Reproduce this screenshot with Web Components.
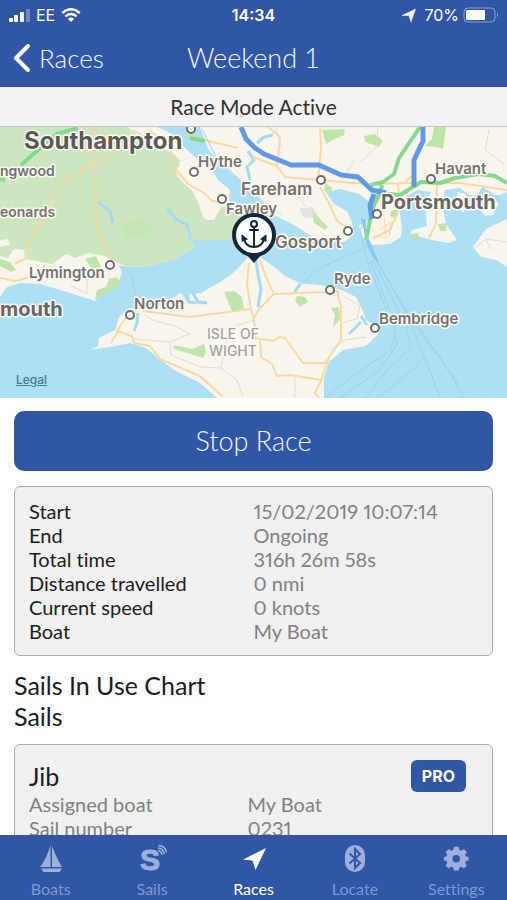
<!DOCTYPE html>
<html lang="en">
<head>
<meta charset="utf-8">
<meta name="viewport" content="width=device-width, initial-scale=1">
<title>Weekend 1</title>
<style>
  body {
    margin: 0;
    font-family: "Century Gothic", Lato, sans-serif;
    font-variant-ligatures: none;
    color: #1c1c1c;
    background: #fff;
    --brand: #3156a5;
    --brand-muted: #8099d0;
    --brand-icon: #9db0dc;
    --panel: #f0f0f0;
    --line: #a9abab;
    --system-font: Inter, "Liberation Sans", sans-serif;
  }
</style>
</head>
<body>
<race-app>
  <status-bar slot="top" carrier="EE" time="14:34" battery="70%"></status-bar>
  <nav-bar slot="top" back="Races">Weekend 1</nav-bar>
  <mode-banner slot="top">Race Mode Active</mode-banner>
  <race-map></race-map>
  <action-button>Stop Race</action-button>
  <info-card>
    <info-table rows='[["Start","15/02/2019 10:07:14"],["End","Ongoing"],["Total time","316h 26m 58s"],["Distance travelled","0 nmi"],["Current speed","0 knots"],["Boat","My Boat"]]'></info-table>
  </info-card>
  <section-title>Sails In Use Chart</section-title>
  <section-title>Sails</section-title>
  <sail-card name="Jib" badge="PRO">
    <info-table muted rows='[["Assigned boat","My Boat"],["Sail number","0231"]]'></info-table>
  </sail-card>
  <tab-bar slot="bottom">
    <tab-item icon="boat">Boats</tab-item>
    <tab-item icon="sail">Sails</tab-item>
    <tab-item icon="race" active>Races</tab-item>
    <tab-item icon="bluetooth">Locate</tab-item>
    <tab-item icon="gear">Settings</tab-item>
  </tab-bar>
</race-app>

<script>
class RaceApp extends HTMLElement {
  constructor() {
    super();
    this.attachShadow({ mode: 'open' });
  }

  connectedCallback() {
    this.shadowRoot.innerHTML = `
      <style>
        :host {
          display: flex;
          flex-direction: column;
          height: 100vh;
        }
        main {
          flex: 1;
          min-height: 0;
          overflow-y: auto;
          scrollbar-width: none;
        }
      </style>
      <slot name="top"></slot>
      <main><slot></slot></main>
      <slot name="bottom"></slot>
    `;
  }
}

class StatusBar extends HTMLElement {
  constructor() {
    super();
    this.attachShadow({ mode: 'open' });
  }

  connectedCallback() {
    this.shadowRoot.innerHTML = `
      <style>
        :host {
          display: grid;
          grid-template-columns: 1fr auto 1fr;
          align-items: center;
          height: 30px;
          padding: 0 8px;
          background: var(--brand);
          color: #fff;
          font: 16px/20px var(--system-font);
        }
        div {
          display: flex;
          align-items: center;
          gap: 6px;
        }
        .right {
          justify-content: flex-end;
          gap: 4px;
        }
        .right svg:first-child {
          margin-right: 4px;
        }
        b {
          font-weight: 600;
        }
      </style>
      <div>
        <svg width="22" height="13" viewBox="0 0 22 13" fill="#fff" aria-hidden="true">
          <rect x="1" y="9" width="4" height="4" rx="1"/>
          <rect x="6" y="6" width="4" height="7" rx="1"/>
          <rect x="12" y="3" width="4" height="10" rx="1"/>
          <rect x="18" y="0" width="4" height="13" rx="1" opacity=".3"/>
        </svg>
        <span>${this.getAttribute('carrier')}</span>
        <svg width="20" height="14" viewBox="0 0 20 14" fill="none" stroke="#fff" stroke-width="2.5" aria-hidden="true">
          <path d="M1.2 5Q10-2.6 18.8 5M4.4 8.4Q10 3.6 15.6 8.4"/>
          <path d="M6.9 10.9Q10 8.2 13.1 10.9L10 14Z" fill="#fff" stroke="none"/>
        </svg>
      </div>
      <b>${this.getAttribute('time')}</b>
      <div class="right">
        <svg width="14" height="13" viewBox="0 0 14 13" aria-hidden="true">
          <path d="M13.5 0L9 13L7 6.600L0 6.5Z" fill="#fff" stroke="#fff" stroke-width=".5"/>
        </svg>
        <span>${this.getAttribute('battery')}</span>
        <svg width="36" height="16" viewBox="0 0 36 16" aria-hidden="true">
          <rect x="1" y="1" width="31" height="14" rx="4" fill="none" stroke="#8ba2d3"/>
          <rect x="3" y="3" width="19" height="10" rx="1" fill="#fff"/>
          <path d="M34 5.5Q36 8 34 10.5Z" fill="#8ba2d3"/>
        </svg>
      </div>
    `;
  }
}

class NavBar extends HTMLElement {
  constructor() {
    super();
    this.attachShadow({ mode: 'open' });
  }

  connectedCallback() {
    this.shadowRoot.innerHTML = `
      <style>
        :host {
          display: grid;
          grid-template-columns: 1fr auto 1fr;
          align-items: center;
          height: 55px;
          padding: 0 13px 2px;
          background: var(--brand);
          color: #f2f6ff;
        }
        a {
          display: flex;
          align-items: center;
          gap: 9px;
          color: inherit;
          font-size: 26px;
          line-height: 32px;
          font-weight: 300;
          text-decoration: none;
        }
        h1 {
          margin: 0;
          font-size: 27px;
          line-height: 32px;
          font-weight: 300;
        }
      </style>
      <a href="#races">
        <svg width="17" height="28" viewBox="0 0 17 28" fill="none" stroke="#fff" stroke-width="4" stroke-linecap="round" stroke-linejoin="round" aria-hidden="true">
          <path d="M15 2L3 14L15 26"/>
        </svg>
        ${this.getAttribute('back')}
      </a>
      <h1><slot></slot></h1>
    `;
  }
}

class ModeBanner extends HTMLElement {
  constructor() {
    super();
    this.attachShadow({ mode: 'open' });
  }

  connectedCallback() {
    this.shadowRoot.innerHTML = `
      <style>
        :host {
          display: block;
          padding: 7px 0 6px;
          border-bottom: 1px solid #c4c4c4;
          background: #f2f2f2;
          color: #303030;
          font-size: 21px;
          line-height: 26px;
          text-align: center;
        }
      </style>
      <slot></slot>
    `;
  }
}

class RaceMap extends HTMLElement {
  constructor() {
    super();
    this.attachShadow({ mode: 'open' });
  }

  connectedCallback() {
    this.shadowRoot.innerHTML = `
      <style>
        :host {
          display: block;
          position: relative;
          background: #ade0f4;
        }
        .map {
          display: block;
          width: 100%;
          height: auto;
        }
        .land { fill: #f9f5ed; }
        .forest { fill: #cce7c0; }
        .park { fill: #c0e5ab; }
        .inlet { fill: none; stroke: #a4dbf2; stroke-width: 3; }
        .road { fill: none; stroke: #fad9a1; stroke-width: 2; stroke-linejoin: round; }
        .lane { fill: none; stroke: #dfdcd7; stroke-width: 1; }
        .trunk { fill: none; stroke: #83d98c; stroke-width: 4; stroke-linejoin: round; }
        .motorway { fill: none; stroke: #5f9ae8; stroke-width: 5; stroke-linejoin: round; }
        .ferry { fill: none; stroke: #9ad2f0; stroke-width: 1; }
        .dots circle { fill: #fff; stroke: #706d69; stroke-width: 2; }
        text {
          font-family: var(--system-font);
          font-weight: 600;
          font-size: 15px;
          fill: #74716e;
          stroke: #fbf9f4;
          stroke-width: 3;
          stroke-linejoin: round;
          paint-order: stroke;
        }
        .city { font-size: 24px; font-weight: 700; fill: #5b5955; }
        .large { font-size: 20px; font-weight: 700; fill: #686562; }
        .town { font-size: 17px; }
        .edge { font-size: 14px; }
        .region { font-size: 14px; font-weight: 500; fill: #a3a09d; text-anchor: middle; }
        a {
          position: absolute;
          left: 16px;
          bottom: 10px;
          color: #53738a;
          font: 500 12px/16px var(--system-font);
        }
      </style>
      <svg class="map" viewBox="0 127 507 271" role="img" aria-label="Map of the Solent">
        <!-- mainland, west of Southampton Water -->
        <path class="land" d="M0 127H157L172 134L182 145L198 160L212 170L218 180L230 190L229 201L247 214L236 226L230 240H192L195 247L187 252L173 260L150 266L127 267L118 265L122 272L117 287L104 293L95 301L67 292L40 284L20 283L7 287L0 297Z"/>
        <path class="forest" d="M0 127H128L140 138L160 147L172 153L180 160L188 161L175 170L182 182L198 195L200 208L207 220H214L222 206L247 214L236 226L230 240H192L195 247L187 252L173 260L150 266L127 267L113 261L104 256L88 253L75 258L66 254L52 264L25 259L24 250L14 249L8 258L0 256Z"/>
        <path class="land" d="M0 240L8 239L10 245L0 247Z"/>
        <path class="land" d="M180 161L196 158L212 171L218 180L229 190L228 199L213 205L212 219L204 219L197 200L192 190L177 176Z"/>
        <path class="park" d="M0 259L10 262L16 270L11 272L0 266ZM85 259L96 256L101 267L92 269ZM117 277L121 284L110 291L95 300L97 290L106 287L109 279Z"/>
        <path d="M120 226L140 219L154 225L146 236L127 239Z" fill="#c5e6b6"/>
        <path class="inlet" d="M98 202L110 211L113 223"/>
        <path class="inlet" d="M167 209L176 219L187 225L191 239"/>
        <path d="M187 227L194 242L189 241Z" fill="#ade0f4"/>

        <!-- mainland, east side -->
        <path class="land" d="M200 127H507V192L497 196L486 189L478 197L468 194L460 188L445 190L442 205L446 224L457 240L448 243L432 240L410 234L412 230L427 226L425 205L431 192L418 190L407 196L399 207L402 228L401 237L390 244L372 245L362 237L359 226L370 219L370 202L359 194L340 189L326 192L334 204L347 211L352 222L354 234L344 242L316 239L296 226L276 216L264 202L250 190L235 176L221 164L208 149Z"/>
        <path class="land" d="M507 219L486 229L473 247L481 257L496 260L507 267Z"/>
        <path class="land" d="M457 192L466 194L464 213L457 208ZM480 208L492 197L499 203L493 215L485 216Z"/>
        <path class="inlet" d="M248 151L254 160L247 167L250 180M257 143L264 137L273 135M478 196L484 188M496 195L500 203"/>
        <path d="M299 208L313 207L320 219L303 217Z" fill="#e6e3df"/>
        <path class="park" d="M322 130L345 129L344 135L333 140L326 144ZM364 136L375 134L383 141L379 147L365 142ZM434 127H446L443 149L436 147L424 146L432 139ZM312 211L320 219L328 227L325 230L314 223ZM325 183L332 188L331 193L324 191ZM391 211L398 208L397 218L390 217ZM409 234L418 233L419 240L410 238ZM438 224L447 223L446 231L440 231ZM186 127L196 136L197 141L187 137Z"/>

        <!-- Isle of Wight -->
        <path class="land" d="M90 350L98 346L99 338L115 330L119 317L129 308L143 309L163 303L181 293L189 303L190 294L201 293L220 282L232 274L240 266L249 256L260 257L273 266L285 276L300 283L326 286L342 290L356 297L362 309L366 320L381 329L377 335L366 346L343 350L329 362L324 378L324 398H217L200 383L174 370L157 357L146 348L130 343L110 347Z"/>
        <path class="inlet" d="M185 295L189 302L196 303M193 293L198 302L207 303M138 313L137 323L134 331M256 261L258 274L261 289L258 307M300 284L294 293M361 322L349 334M361 316L367 325"/>
        <path class="park" d="M173 345L192 349L204 344L206 353L203 358L184 352L174 349ZM224 292L234 291L242 297L244 309L232 311ZM297 296L305 297L308 302L300 307L295 301ZM331 308L339 307L341 319L333 327L335 315Z"/>

        <g class="lane">
          <path d="M25 245L60 250L75 230M70 285L87 294V273M145 315L155 321L175 326L190 334L170 342L134 339M170 342L171 355L200 367L221 368L237 380L243 397M221 368L226 342L235 326L254 320M330 350L345 340L366 337M340 323L357 319L360 306L345 297M295 378V398"/>
          <path d="M276 128L282 148M378 127L376 148L360 162M489 130L485 150L504 164M355 159L344 177M260 200L282 215M290 184L305 206M475 248L486 239L507 242M486 239L491 250"/>
        </g>
        <g class="road">
          <path d="M94 127L95 162L96 225L110 256M115 151L95 163L86 164L79 173L65 180L55 193L49 212L40 225L27 240L26 258L15 264M0 278L16 281L34 276L45 266M133 130L145 137L135 145M147 129L170 145L174 167L188 184L204 193L212 201L226 203M200 139L238 148"/>
          <path d="M253 157L277 166L285 177L320 180L365 184L410 183L460 183L507 190M268 127L280 137L277 167M320 127L321 150L318 179M320 187L330 205L337 221L349 229M398 183L400 207L390 230L373 238M405 182L415 173M437 183L436 224L429 238"/>
          <path d="M143 311L190 317L251 309L254 320L256 340M251 309L247 285L249 263M260 260L266 277L274 294L326 292L337 291L341 307L341 340L325 363H303L285 338L279 337L274 341L254 338M274 294L259 309L253 320M127 316L117 331L132 336L134 343L150 346L160 359L200 376L223 397M260 340L261 357L272 364L277 376L290 375L321 380M329 358L321 381L315 393L319 398M119 330L111 343"/>
        </g>
        <path d="M375 192L383 205L386 237M375 237L389 237L391 222L379 230" fill="none" stroke="#f6dbae" stroke-width="1"/>

        <g class="ferry">
          <path d="M202 129L217 159L238 178L258 207L275 235M123 266L132 276L135 296M371 245L350 254L315 271L294 292M365 222L360 230L367 260L382 300L395 330L391 350L360 371L324 398M370 260L392 316L397 345L378 371L340 398M373 260L405 323L411 347L385 372L366 398M376 260L406 312L424 356L416 367L400 380L378 398M380 267L415 325L449 371L464 398M424 356L440 397M407 310L459 385"/>
        </g>
        <path d="M361 218L367 245L373 258L379 264L372 245L366 234L366 220Z" fill="#8cc8ef"/>

        <path class="trunk" d="M78 128L57 134L39 149L21 165M5 180L0 179M190 138L205 141"/>
        <path class="trunk" d="M420 127L399 158L394 174L383 182L371 185M507 183L495 176L478 174L455 178L440 183L421 182L400 195L380 193L374 205L370 220L366 240M380 193L382 185"/>
        <path class="motorway" d="M241 127L246 139L255 148L264 154L291 165H319L341 175L358 177L372 190L386 193M423 127V141L414 160V187M374 194L370 205L372 219"/>

        <g class="dots">
          <circle cx="191" cy="129" r="4"/>
          <circle cx="194" cy="172" r="4"/>
          <circle cx="222" cy="199" r="4"/>
          <circle cx="321" cy="180" r="4"/>
          <circle cx="431" cy="179" r="4"/>
          <circle cx="377" cy="214" r="4"/>
          <circle cx="348" cy="231" r="4"/>
          <circle cx="110" cy="265" r="4"/>
          <circle cx="130" cy="315" r="4"/>
          <circle cx="330" cy="290" r="4"/>
          <circle cx="375" cy="328" r="4"/>
        </g>

        <text class="city" x="24" y="149">Southampton</text>
        <text class="edge" x="0" y="176">ngwood</text>
        <text class="edge" x="0" y="217">eonards</text>
        <text x="198" y="167">Hythe</text>
        <text class="town" x="241" y="195">Fareham</text>
        <text x="226" y="214">Fawley</text>
        <text x="435" y="174">Havant</text>
        <text class="large" x="381" y="209">Portsmouth</text>
        <text class="town" x="275" y="248">Gosport</text>
        <text x="29" y="278">Lymington</text>
        <text class="large" x="0" y="316">mouth</text>
        <text x="134" y="309">Norton</text>
        <text x="334" y="284">Ryde</text>
        <text x="379" y="324">Bembridge</text>
        <text class="region" x="233" y="339">ISLE OF</text>
        <text class="region" x="233" y="356">WIGHT</text>

        <!-- anchor pin -->
        <path d="M246 254L254 263L262 254Z" fill="#12283a"/>
        <circle cx="254" cy="235" r="20" fill="#fff" stroke="#12283a" stroke-width="4"/>
        <g fill="none" stroke="#12283a" stroke-width="2" stroke-linecap="round" stroke-linejoin="round">
          <circle cx="254" cy="224" r="3"/>
          <path d="M254 227V247M250 230H258M244 239Q246 247 254 247Q262 247 264 239"/>
          <path d="M242 241V235L247 239ZM266 241V235L261 239Z" fill="#12283a" stroke-width="1"/>
        </g>
      </svg>
      <a href="#legal">Legal</a>
    `;
  }
}

class ActionButton extends HTMLElement {
  constructor() {
    super();
    this.attachShadow({ mode: 'open' });
  }

  connectedCallback() {
    this.shadowRoot.innerHTML = `
      <style>
        :host {
          display: block;
          margin: 13px 14px 15px;
        }
        button {
          display: block;
          width: 100%;
          padding: 14px;
          border: 0;
          border-radius: 10px;
          background: var(--brand);
          color: #f2f6ff;
          font: inherit;
          font-size: 27px;
          line-height: 32px;
          font-weight: 300;
        }
      </style>
      <button type="button"><slot></slot></button>
    `;
  }
}

class InfoCard extends HTMLElement {
  constructor() {
    super();
    this.attachShadow({ mode: 'open' });
  }

  connectedCallback() {
    this.shadowRoot.innerHTML = `
      <style>
        :host {
          display: block;
          margin: 0 14px 14px;
          padding: 12px 14px;
          border: 1px solid var(--line);
          border-radius: 6px;
          background: var(--panel);
        }
      </style>
      <slot></slot>
    `;
  }
}

class InfoTable extends HTMLElement {
  constructor() {
    super();
    this.attachShadow({ mode: 'open' });
  }

  connectedCallback() {
    const rows = JSON.parse(this.getAttribute('rows'));
    this.shadowRoot.innerHTML = `
      <style>
        :host {
          display: block;
          font-size: 20px;
          line-height: 24px;
        }
        table {
          width: 100%;
          table-layout: fixed;
          border-collapse: collapse;
        }
        th, td {
          padding: 0;
          font-weight: 400;
          text-align: left;
        }
        td, :host([muted]) th {
          color: #808080;
        }
        td {
          font-variant-numeric: proportional-nums;
        }
      </style>
      <table>
        ${rows.map(([label, value]) => `<tr><th scope="row">${label}</th><td>${value}</td></tr>`).join('')}
      </table>
    `;
  }
}

class SectionTitle extends HTMLElement {
  constructor() {
    super();
    this.attachShadow({ mode: 'open' });
  }

  connectedCallback() {
    this.shadowRoot.innerHTML = `
      <style>
        :host {
          display: block;
          margin: 0 14px;
        }
        h2 {
          margin: 0;
          font-size: 25px;
          line-height: 31px;
          font-weight: 400;
        }
      </style>
      <h2><slot></slot></h2>
    `;
  }
}

class SailCard extends HTMLElement {
  constructor() {
    super();
    this.attachShadow({ mode: 'open' });
  }

  connectedCallback() {
    this.shadowRoot.innerHTML = `
      <style>
        :host {
          display: block;
          margin: 12px 14px;
          padding: 15px 26px 15px 14px;
          border: 1px solid var(--line);
          border-radius: 6px;
          background: var(--panel);
        }
        header {
          display: flex;
          justify-content: space-between;
          align-items: center;
        }
        h3 {
          margin: 0;
          font-size: 25px;
          line-height: 31px;
          font-weight: 400;
        }
        span {
          padding: 4px 11px;
          border-radius: 6px;
          background: var(--brand);
          color: #fff;
          font: 700 16px/24px var(--system-font);
        }
      </style>
      <header>
        <h3>${this.getAttribute('name')}</h3>
        <span>${this.getAttribute('badge')}</span>
      </header>
      <slot></slot>
    `;
  }
}

class TabBar extends HTMLElement {
  constructor() {
    super();
    this.attachShadow({ mode: 'open' });
  }

  connectedCallback() {
    this.shadowRoot.innerHTML = `
      <style>
        nav {
          display: flex;
          background: var(--brand);
        }
        ::slotted(*) {
          flex: 1;
        }
      </style>
      <nav><slot></slot></nav>
    `;
  }
}

const TAB_ICONS = {
  boat: `
    <path d="M14.500 1Q11 14 4 23H14.500ZM16 2V23H26Q21 15 16 2Z"/>
    <path d="M5 24.500H26L23.500 28H7.500Z"/>`,
  sail: `
    <text x="3" y="26" font-family="Liberation Sans, sans-serif" font-weight="700" font-size="30" stroke="currentColor">S</text>
    <path d="M21 6.500Q24.500 7 25 11M21 4Q26.500 4.500 27.300 10M21.500 1.500Q28.500 2 29.500 8.500" fill="none" stroke="currentColor" stroke-width="1.500"/>`,
  race: '<path d="M27 4L16.500 26L13.500 16.500L4 15.500Z"/>',
  bluetooth: `
    <rect x="5" y="1" width="20" height="27" rx="10"/>
    <path d="M9.500 9.500L20 19L15 24V5L20 10L9.500 19.500" fill="none" stroke="var(--brand)" stroke-width="2"/>`,
  gear: `
    <path fill-rule="evenodd" d="M12.500 3H17.500L18.200 6.200L20.300 7.100L23.100 5.300L26.200 8.600L24.400 11.400L25.200 13.200L28 13.800V17.200L25.200 17.800L24.400 19.700L26.200 22.500L23.100 25.700L20.300 23.900L18.200 24.800L17.500 28H12.500L11.800 24.800L9.700 23.900L6.900 25.700L3.800 22.500L5.600 19.700L4.800 17.800L2 17.200V13.800L4.800 13.200L5.600 11.400L3.800 8.600L6.900 5.300L9.700 7.100L11.800 6.200ZM15 11.500A4 4 0 1 0 15 19.500A4 4 0 1 0 15 11.500Z" transform="translate(1 0) scale(.95)"/>`
};

class TabItem extends HTMLElement {
  constructor() {
    super();
    this.attachShadow({ mode: 'open' });
  }

  connectedCallback() {
    this.shadowRoot.innerHTML = `
      <style>
        :host {
          display: block;
          color: var(--brand-muted);
        }
        svg {
          color: var(--brand-icon);
        }
        :host([active]), :host([active]) svg {
          color: #fff;
        }
        a {
          display: flex;
          flex-direction: column;
          align-items: center;
          gap: 5px;
          padding: 9px 0 1px;
          color: inherit;
          font-size: 16px;
          line-height: 20px;
          text-decoration: none;
        }
      </style>
      <a href="#${this.getAttribute('icon')}">
        <svg width="30" height="30" viewBox="0 0 30 30" fill="currentColor" aria-hidden="true">${TAB_ICONS[this.getAttribute('icon')]}</svg>
        <span><slot></slot></span>
      </a>
    `;
  }
}

// Define the custom elements
customElements.define('race-app', RaceApp);
customElements.define('status-bar', StatusBar);
customElements.define('nav-bar', NavBar);
customElements.define('mode-banner', ModeBanner);
customElements.define('race-map', RaceMap);
customElements.define('action-button', ActionButton);
customElements.define('info-card', InfoCard);
customElements.define('info-table', InfoTable);
customElements.define('section-title', SectionTitle);
customElements.define('sail-card', SailCard);
customElements.define('tab-bar', TabBar);
customElements.define('tab-item', TabItem);
</script>
</body>
</html>
